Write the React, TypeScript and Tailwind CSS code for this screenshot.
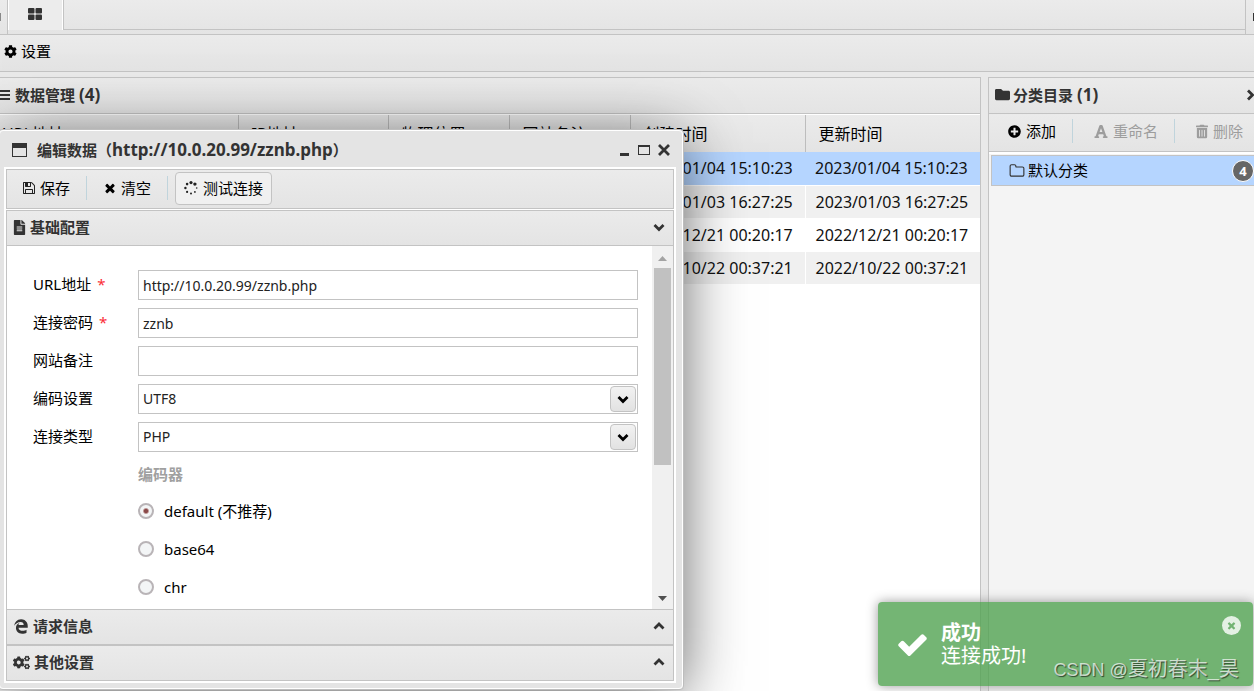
import { useState } from "react";
import type { ReactNode } from "react";
import { FaCog, FaCogs, FaEdgeLegacy, FaFileAlt, FaFolder, FaFont, FaPlusCircle, FaTrashAlt } from "react-icons/fa";

const rows = [
  { created: "2023/01/04 15:10:23", updated: "2023/01/04 15:10:23" },
  { created: "2023/01/03 16:27:25", updated: "2023/01/03 16:27:25" },
  { created: "2022/12/21 00:20:17", updated: "2022/12/21 00:20:17" },
  { created: "2022/10/22 00:37:21", updated: "2022/10/22 00:37:21" },
];

const columns = ["URL地址", "IP地址", "物理位置", "网站备注", "创建时间", "更新时间"];

const encoders = [
  { value: "default", label: "default (不推荐)" },
  { value: "base64", label: "base64" },
  { value: "chr", label: "chr" },
];

const SolidIcon = ({ d, size, className = "" }: { d: string; size: number; className?: string }) => (
  <svg width={size} height={size} viewBox="0 0 1792 1792" fill="currentColor" className={`shrink-0 ${className}`}>
    <path d={d} />
  </svg>
);

const savePath =
  "M512 1536h768v-384h-768v384zm896 0h128v-896q0-14-10-38.5t-20-34.5l-281-281q-10-10-34-20t-39-10v416q0 40-28 68t-68 28h-576q-40 0-68-28t-28-68v-416h-128v1280h128v-416q0-40 28-68t68-28h832q40 0 68 28t28 68v416zm-384-928v-320q0-13-9.5-22.5t-22.5-9.5h-192q-13 0-22.5 9.5t-9.5 22.5v320q0 13 9.5 22.5t22.5 9.5h192q13 0 22.5-9.5t9.5-22.5zm640 32v928q0 40-28 68t-68 28h-1344q-40 0-68-28t-28-68v-1344q0-40 28-68t68-28h928q40 0 88 20t76 48l280 280q28 28 48 76t20 88z";
const folderPath =
  "M1600 1312v-704q0-40-28-68t-68-28h-704q-40 0-68-28t-28-68v-64q0-40-28-68t-68-28h-320q-40 0-68 28t-28 68v960q0 40 28 68t68 28h1216q40 0 68-28t28-68zm128-704v704q0 92-66 158t-158 66h-1216q-92 0-158-66t-66-158v-960q0-92 66-158t158-66h320q92 0 158 66t66 158v32h672q92 0 158 66t66 158z";
const checkPath =
  "M1671 566q0 40-28 68l-724 724-136 136q-28 28-68 28t-68-28l-136-136-362-362q-28-28-28-68t28-68l136-136q28-28 68-28t68 28l294 295 656-657q28-28 68-28t68 28l136 136q28 28 28 68z";
const timesPath =
  "M1490 1322q0 40-28 68l-136 136q-28 28-68 28t-68-28l-294-294-294 294q-28 28-68 28t-68-28l-136-136q-28-28-28-68t28-68l294-294-294-294q-28-28-28-68t28-68l136-136q28-28 68-28t68 28l294 294 294-294q28-28 68-28t68 28l136 136q28 28 28 68t-28 68l-294 294 294 294q28 28 28 68z";

const ThLargeIcon = () => (
  <svg width="14" height="12" viewBox="0 0 14 12" fill="#333">
    <rect width="6.5" height="5.5" rx="1" />
    <rect x="7.5" width="6.5" height="5.5" rx="1" />
    <rect y="6.5" width="6.5" height="5.5" rx="1" />
    <rect x="7.5" y="6.5" width="6.5" height="5.5" rx="1" />
  </svg>
);

const BarsIcon = () => (
  <svg width="10" height="12" viewBox="0 0 10 12" fill="#333" className="shrink-0">
    <rect y="1" width="10" height="2" />
    <rect y="5" width="10" height="2" />
    <rect y="9" width="10" height="2" />
  </svg>
);

const WindowIcon = () => (
  <svg width="15" height="14" viewBox="0 0 15 14" className="shrink-0">
    <rect x="0.5" y="0.5" width="14" height="13" fill="none" stroke="#333" />
    <rect width="15" height="5" fill="#333" />
  </svg>
);

const SpinnerIcon = () => (
  <svg width="14" height="14" viewBox="0 0 14 14" fill="#222" className="shrink-0">
    <circle cx="7" cy="1.6" r="1.6" />
    <circle cx="10.9" cy="3.1" r="1.7" />
    <circle cx="12.7" cy="7" r="0.8" />
    <circle cx="10.9" cy="10.9" r="0.9" />
    <circle cx="7" cy="12.6" r="1" />
    <circle cx="3.1" cy="10.9" r="1.1" />
    <circle cx="1.4" cy="7" r="1.2" />
    <circle cx="3.1" cy="3.1" r="1.3" />
  </svg>
);

const Chevron = ({ dir }: { dir: "up" | "down" | "right" }) => {
  const points = { up: "1.5,8.5 6,4 10.5,8.5", down: "1.5,4 6,8.5 10.5,4", right: "4,1.5 8.5,6 4,10.5" };
  return (
    <svg width="12" height="12" viewBox="0 0 12 12" fill="none" stroke="currentColor" strokeWidth="2.8" className="shrink-0">
      <polyline points={points[dir]} />
    </svg>
  );
};

const Separator = () => <span className="h-6 w-px bg-[#c0d4dc]" />;

const SectionHeader = ({ icon, title, open }: { icon: ReactNode; title: string; open?: boolean }) => (
  <button className="flex h-9 w-full shrink-0 items-center gap-1 border border-[#c3c3c3] bg-linear-to-b from-[#ebebeb] to-[#e4e4e4] pr-2 pb-0.5 pl-1.5 font-bold text-[#333]">
    {icon}
    <span className="flex-1 text-left">{title}</span>
    <Chevron dir={open ? "down" : "up"} />
  </button>
);

const Field = ({ id, label, required, children }: { id: string; label: string; required?: boolean; children: ReactNode }) => (
  <div className="flex h-[30px] items-center">
    <label htmlFor={id} className="w-[105px] shrink-0 pb-0.5 text-black">
      {label}
      {required && <span className="ml-1.5 text-red-500">*</span>}
    </label>
    {children}
  </div>
);

const inputClass = "h-[30px] w-full min-w-0 flex-1 border border-[#c3c3c3] bg-white pl-1 text-sm text-[#222] outline-none";

const SelectBox = ({ id, options }: { id: string; options: string[] }) => (
  <div className="relative flex-1">
    <select id={id} className={`${inputClass} block appearance-none rounded-none`}>
      {options.map((option) => (
        <option key={option}>{option}</option>
      ))}
    </select>
    <span className="pointer-events-none absolute top-0.5 right-0.5 flex h-[26px] w-[26px] items-center justify-center rounded-sm border border-[#c3c3c3] bg-linear-to-b from-[#f2f2f2] to-[#e2e2e2] text-black">
      <Chevron dir="down" />
    </span>
  </div>
);

const EditDialog = () => {
  const [url, setUrl] = useState("http://10.0.20.99/zznb.php");
  const [password, setPassword] = useState("zznb");
  const [note, setNote] = useState("");
  const [encoder, setEncoder] = useState("default");

  return (
    <div className="absolute top-[129px] -left-0.5 z-10 w-[686px] rounded border border-[#bdbdbd] bg-[#e4e4e4] shadow-[0_10px_60px_-4px_rgba(0,0,0,0.65)]">
      <div className="rounded border border-white pr-1.5 pb-[5px] pl-1">
        <div className="flex h-9 items-center pt-0.5 pr-1.5 pl-2 font-bold text-[#333]">
          <WindowIcon />
          <h2 className="flex-1 pl-2.5">
            编辑数据（<span className="text-[17px]">http://10.0.20.99/zznb.php</span>）
          </h2>
          <div className="flex items-center gap-2">
            <button aria-label="最小化">
              <svg width="12" height="12" viewBox="0 0 12 12" className="block">
                <rect x="2" y="9" width="9" height="3" fill="#333" />
              </svg>
            </button>
            <button aria-label="最大化">
              <svg width="12" height="12" viewBox="0 0 12 12" className="block">
                <rect x="0.5" y="1.500" width="11" height="9" fill="none" stroke="#333" />
                <rect y="1" width="12" height="2" fill="#333" />
              </svg>
            </button>
            <button aria-label="关闭">
              <svg width="12" height="12" viewBox="0 0 12 12" stroke="#333" strokeWidth="2.8" className="block">
                <path d="M1 1l10 10M11 1L1 11" />
              </svg>
            </button>
          </div>
        </div>

        <div className="border-2 border-white bg-white">
          <div className="flex h-10 items-center border border-[#c3c3c3] bg-linear-to-b from-[#ebebeb] to-[#e4e4e4] pb-0.5 pl-[15px] text-black">
            <button className="flex items-center gap-1 pr-4">
              <SolidIcon d={savePath} size={14} className="text-[#222]" />
              保存
            </button>
            <Separator />
            <button className="flex items-center gap-1 px-4">
              <SolidIcon d={timesPath} size={14} />
              清空
            </button>
            <Separator />
            <button className="ml-[7px] flex h-[33px] items-center gap-[5px] rounded-sm border border-[#c3c3c3] bg-[#f0f0f0] px-2">
              <SpinnerIcon />
              测试连接
            </button>
          </div>

          <div className="mt-px">
            <SectionHeader icon={<FaFileAlt className="w-[13px]" />} title="基础配置" open />
            <div className="flex h-[363px] border-r border-l border-[#c3c3c3]">
              <form className="flex flex-1 flex-col gap-2 overflow-hidden pt-6 pr-3.5 pl-[26px]">
                <Field id="url" label="URL地址" required>
                  <input id="url" type="text" value={url} onChange={(e) => setUrl(e.target.value)} className={inputClass} />
                </Field>
                <Field id="password" label="连接密码" required>
                  <input id="password" type="text" value={password} onChange={(e) => setPassword(e.target.value)} className={inputClass} />
                </Field>
                <Field id="note" label="网站备注">
                  <input id="note" type="text" value={note} onChange={(e) => setNote(e.target.value)} className={inputClass} />
                </Field>
                <Field id="encode" label="编码设置">
                  <SelectBox id="encode" options={["UTF8", "GBK"]} />
                </Field>
                <Field id="type" label="连接类型">
                  <SelectBox id="type" options={["PHP", "ASP"]} />
                </Field>
                <fieldset className="flex flex-col gap-2 pl-[105px]">
                  <legend className="mb-2 flex h-7 items-center font-bold text-[#a0a0a0]">编码器</legend>
                  {encoders.map((item) => (
                    <label key={item.value} className="flex h-[30px] items-center gap-2.5 text-black">
                      <input
                        type="radio"
                        name="encoder"
                        value={item.value}
                        checked={encoder === item.value}
                        onChange={() => setEncoder(item.value)}
                        className="size-4 appearance-none rounded-full border-2 border-[#b9b4b7] bg-[#f3f5f6] checked:bg-radial checked:from-[#8a4a4a] checked:from-20% checked:to-[#f3f5f6] checked:to-40%"
                      />
                      {item.label}
                    </label>
                  ))}
                </fieldset>
              </form>
              {/* scroll bar */}
              <div className="flex w-[21px] flex-col items-center justify-between bg-[#f0f0f0] pt-2.5 pb-2">
                <div className="flex flex-col items-center gap-[7px]">
                  <svg width="9" height="5" viewBox="0 0 9 5" fill="#a3a3a3">
                    <path d="M0 5L4.500 0L9 5z" />
                  </svg>
                  <div className="h-[197px] w-[17px] bg-[#c1c1c1]" />
                </div>
                <svg width="9" height="5" viewBox="0 0 9 5" fill="#505050">
                  <path d="M0 0h9L4.500 5z" />
                </svg>
              </div>
            </div>
            <SectionHeader icon={<FaEdgeLegacy className="w-4" />} title="请求信息" />
            <SectionHeader icon={<FaCogs className="w-[17px]" />} title="其他设置" />
          </div>
        </div>
      </div>
    </div>
  );
};

const DataPanel = () => (
  <section className="flex min-w-0 flex-1 flex-col border-t border-r border-[#c3c3c3] bg-white">
    <h2 className="flex h-9 shrink-0 items-center gap-[5px] border-b border-[#c3c3c3] bg-linear-to-b from-[#ebebeb] to-[#e4e4e4] pb-0.5 font-bold text-[#333]">
      <BarsIcon />
      <span>
        数据管理 <span className="text-[17px]">(4)</span>
      </span>
    </h2>
    <table className="mt-px w-full table-fixed text-base text-[#111]">
      <colgroup>
        <col className="w-[238px]" />
        <col className="w-[150px]" />
        <col className="w-[121px]" />
        <col className="w-[121px]" />
        <col className="w-[175px]" />
        <col />
      </colgroup>
      <thead>
        <tr className="h-[37px] bg-linear-to-b from-[#ebebeb] to-[#e4e4e4] text-black">
          {columns.map((column, i) => (
            <th
              key={column}
              className={`border-[#bdbdbd] text-left font-normal not-last:border-r ${i === 0 ? "pl-0.5" : "pl-[13px]"}`}
            >
              {column}
            </th>
          ))}
        </tr>
      </thead>
      <tbody>
        {rows.map((row, i) => (
          <tr
            key={row.created}
            className={`h-[33px] border-b border-white ${i === 0 ? "bg-[#b5d5ff]" : i % 2 ? "bg-[#f0f0f0]" : "bg-white"}`}
          >
            <td colSpan={4} />
            <td className={`pl-2.5 whitespace-nowrap ${i === 0 ? "" : "border-r border-white"}`}>{row.created}</td>
            <td className="pl-2.5 whitespace-nowrap">{row.updated}</td>
          </tr>
        ))}
      </tbody>
    </table>
  </section>
);

const CategoryPanel = () => (
  <aside className="flex w-[266px] shrink-0 flex-col overflow-hidden border-t border-l border-[#c3c3c3] bg-[#f4f4f4]">
    <div className="flex h-9 shrink-0 items-center gap-[3px] border-b border-[#c3c3c3] bg-linear-to-b from-[#ebebeb] to-[#e4e4e4] pb-0.5 pl-1.5 font-bold text-[#333]">
      <FaFolder className="w-[15px]" />
      <h2 className="flex-1">
        分类目录 <span className="text-[17px]">(1)</span>
      </h2>
      <button aria-label="折叠" className="-mr-0.5">
        <Chevron dir="right" />
      </button>
    </div>
    <div className="flex h-[38px] shrink-0 items-center border-b border-[#c3c3c3] bg-linear-to-b from-[#ebebeb] to-[#e4e4e4] pb-[3px] pl-[19px] whitespace-nowrap text-black">
      <button className="flex items-center gap-[5px] pr-4">
        <FaPlusCircle className="w-[13px]" />
        添加
      </button>
      <Separator />
      <button disabled className="flex items-center gap-[5px] pr-4 pl-[21px] text-[#9d9d9d]">
        <FaFont className="w-[14px]" />
        重命名
      </button>
      <Separator />
      <button disabled className="flex items-center gap-[5px] pl-[21px] text-[#9d9d9d]">
        <FaTrashAlt className="w-[12px]" />
        删除
      </button>
    </div>
    <div className="border-t-2 border-white pt-px pl-0.5">
      <a href="#default" className="flex h-[31px] items-center gap-[3px] border border-r-0 border-[#c3c3c3] bg-[#b5d5ff] pl-[17px] text-black">
        <SolidIcon d={folderPath} size={16} className="text-[#333]" />
        <span className="flex-1 pb-0.5">默认分类</span>
        <span className="flex size-[22px] items-center justify-center rounded-full border border-white bg-[#666] text-[13px] font-bold text-white">
          4
        </span>
      </a>
    </div>
  </aside>
);

const Toast = () => (
  <div className="absolute right-px bottom-[5px] z-20 flex h-[84px] w-[375px] items-center gap-3 rounded bg-[#51a351]/80 pl-[18px] text-xl leading-[23px] text-white shadow-[0_0_12px_#999]">
    <SolidIcon d={checkPath} size={33} />
    <div>
      <p className="font-bold">成功</p>
      <p>连接成功!</p>
    </div>
    <button aria-label="关闭通知" className="absolute top-3.5 right-3 flex size-[19px] items-center justify-center rounded-full bg-white/80">
      <SolidIcon d={timesPath} size={11} className="text-[#72b372]" />
    </button>
    <span className="absolute right-3.5 bottom-0.5 font-['Liberation_Sans','Noto_Sans_CJK_SC',sans-serif] whitespace-nowrap text-white/70 [text-shadow:1px_1px_1px_rgba(0,0,0,0.6)]">
      <span className="text-lg">CSDN @</span>夏初春末_昊
    </span>
  </div>
);

const App = () => {
  return (
    <div className="relative flex h-screen flex-col overflow-hidden bg-[#e9e9e9] font-['Noto_Sans','Noto_Sans_CJK_SC',sans-serif] text-[15px] leading-5">
      {/* Tabs */}
      <nav className="flex h-[35px] shrink-0 border-b border-[#c3c3c3] bg-linear-to-b from-[#ebebeb] to-[#e4e4e4]">
        <div className="flex w-2 items-center border-r border-[#c3c3c3]">
          <span className="h-2 w-px bg-[#888]" />
        </div>
        <button aria-label="首页" className="flex h-[30px] w-[55px] items-center justify-center border-r border-l border-white bg-[#ececec] pr-0.5 pb-0.5">
          <ThLargeIcon />
        </button>
        <div className="h-[30px] flex-1 border-b border-l border-[#c3c3c3]" />
        <div className="flex w-[9px] items-center justify-end border-l border-[#c3c3c3]">
          <span className="h-2 w-px bg-[#333]" />
        </div>
      </nav>

      <div className="flex h-[37px] shrink-0 items-center border-b border-[#c3c3c3] bg-linear-to-b from-[#ebebeb] to-[#e4e4e4] pb-1 pl-1">
        <button className="flex items-center gap-1 text-black">
          <FaCog className="w-[13px]" />
          设置
        </button>
      </div>

      <main className="flex min-h-0 flex-1 gap-[7px] pt-[5px]">
        <DataPanel />
        <CategoryPanel />
      </main>

      <EditDialog />
      <Toast />
    </div>
  );
};

export default App;
